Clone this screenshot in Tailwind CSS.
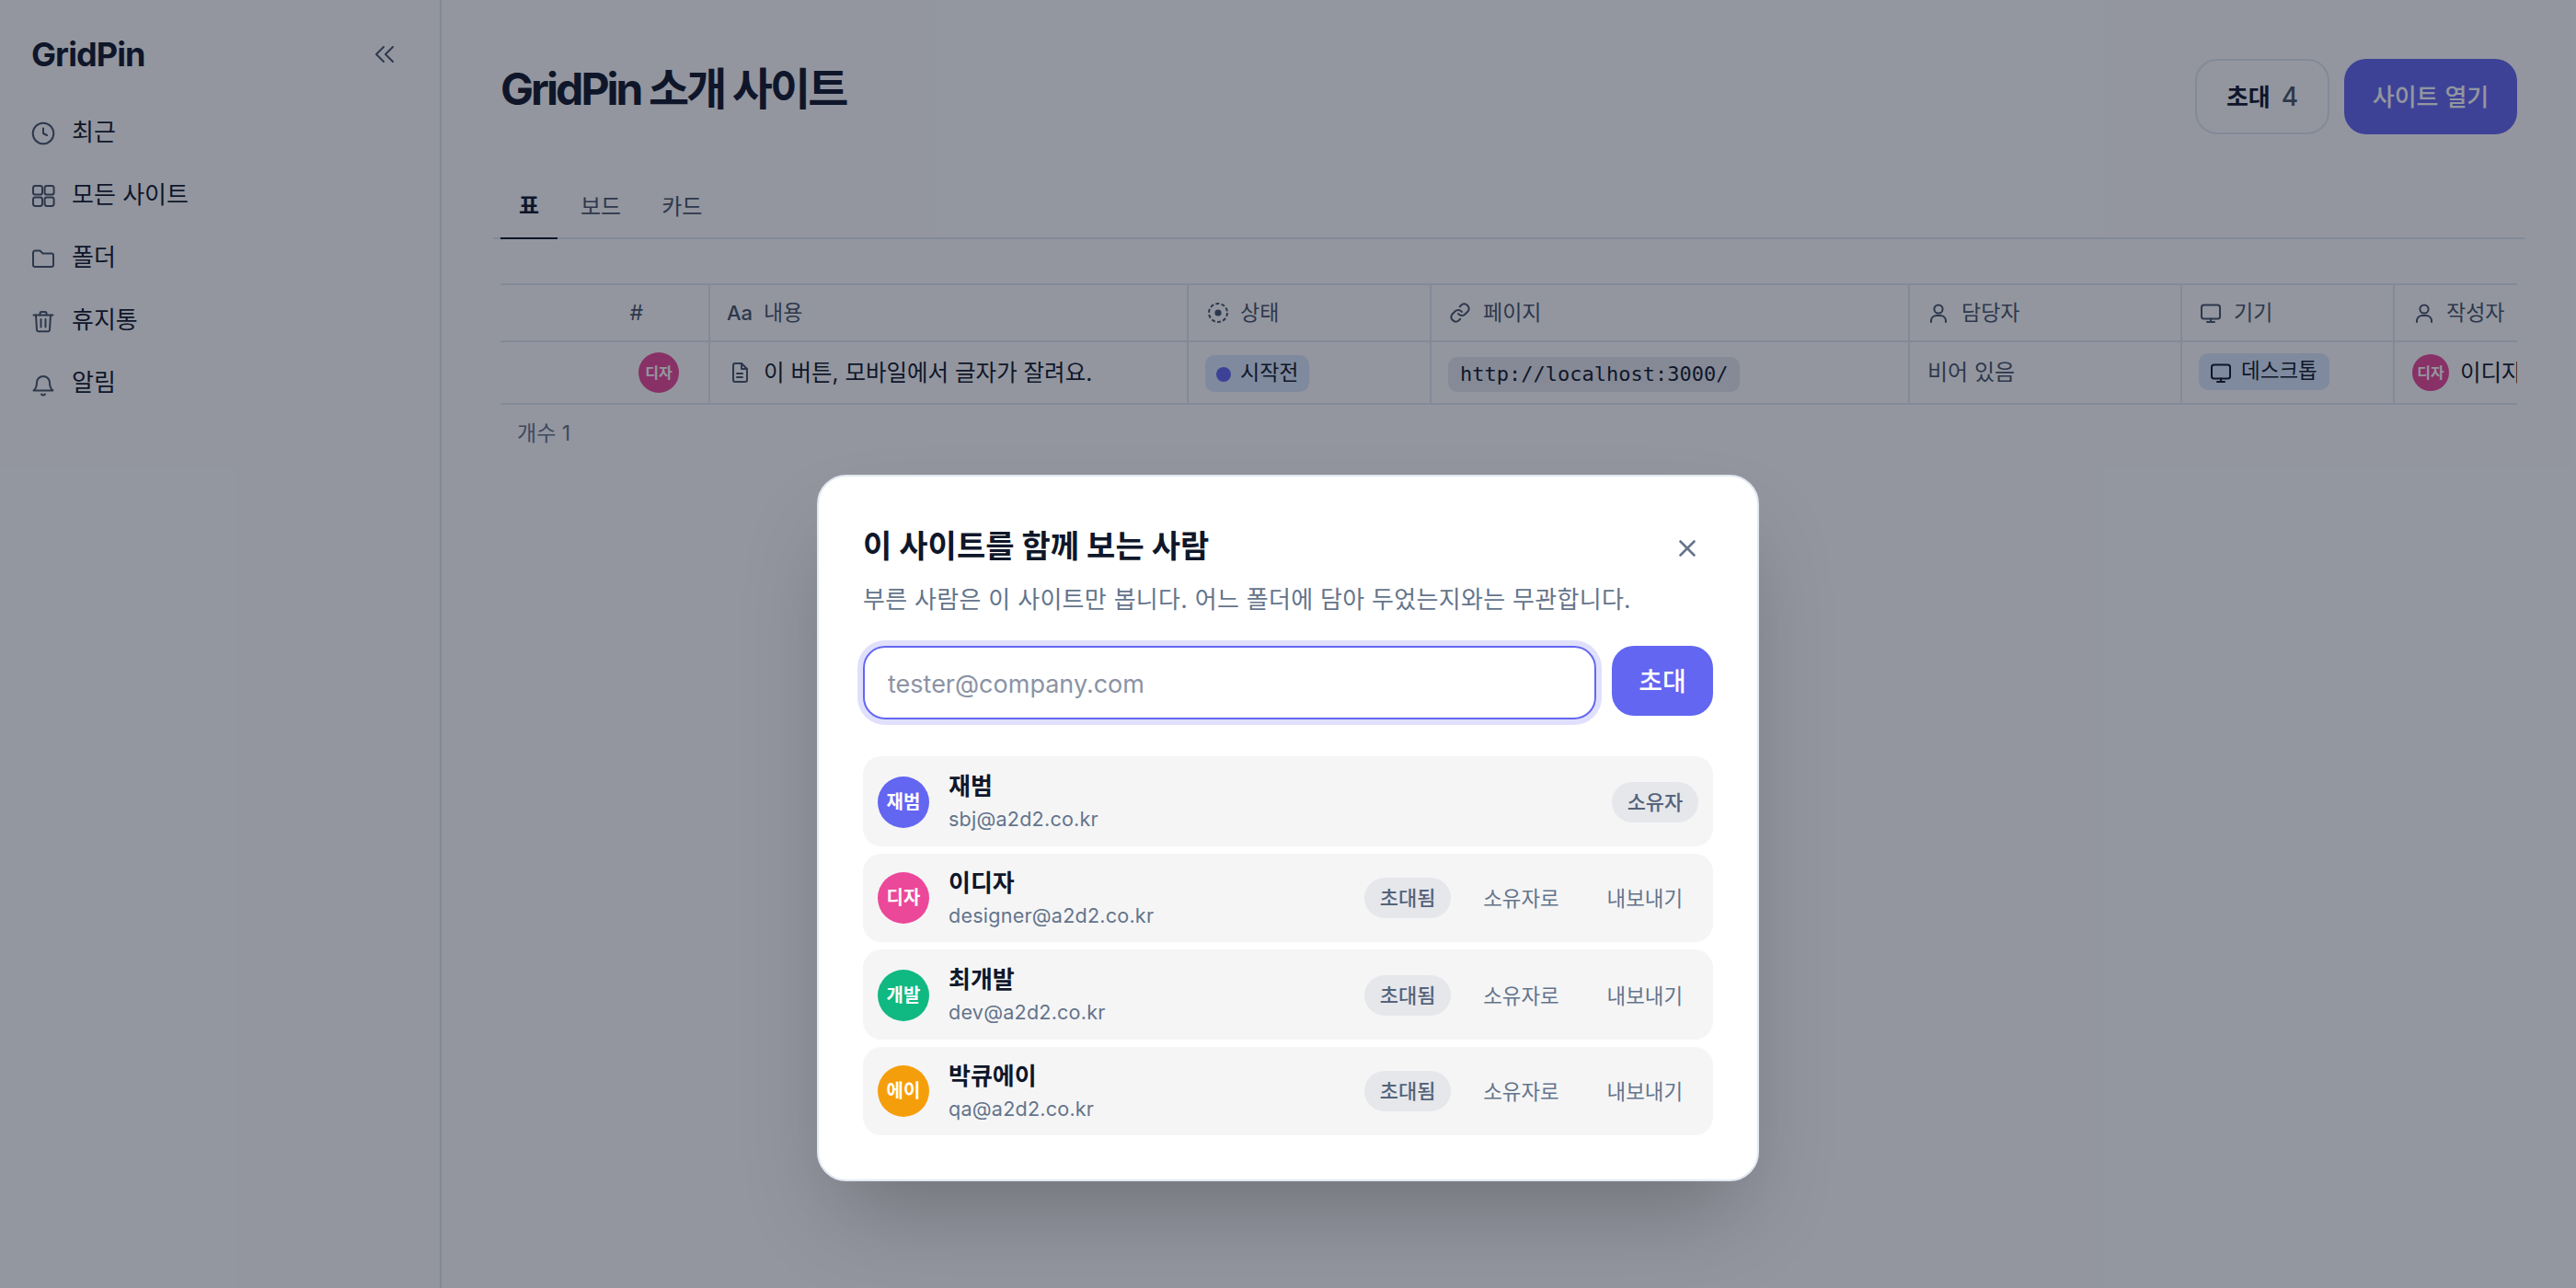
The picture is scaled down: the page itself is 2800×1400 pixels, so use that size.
<!DOCTYPE html>
<html lang="ko">
<head>
<meta charset="utf-8">
<title>GridPin</title>
<script src="https://cdn.jsdelivr.net/npm/@tailwindcss/browser@4"></script>
</head>
<body class="m-0">
<div class="relative flex w-[2800px] h-[1400px] overflow-hidden bg-white text-[#0f172a] font-['Inter','Noto_Sans_CJK_KR',sans-serif]">

  <aside class="w-[480px] h-full shrink-0 border-r-2 border-[#e2e8f0] flex flex-col">
    <div class="flex items-center justify-between h-[118px] pl-[34px] pr-[48px]">
      <span class="text-[36px] font-bold tracking-[-0.9px] leading-none">GridPin</span>
      <svg class="w-6 h-6 text-[#475569]" viewBox="0 0 24 24" fill="none" stroke="currentColor" stroke-width="2" stroke-linecap="round" stroke-linejoin="round"><path d="M11 4l-8 8 8 8"/><path d="M21 4l-8 8 8 8"/></svg>
    </div>
    <nav class="flex flex-col pl-[33px] mt-[-7px]">
      <div class="flex items-center gap-[17px] h-[68px] text-[26px]">
        <svg class="w-7 h-7 text-[#475569]" viewBox="0 0 28 28" fill="none" stroke="currentColor" stroke-width="2" stroke-linecap="round" stroke-linejoin="round"><circle cx="14" cy="14" r="11.3"/><path d="M14 8.5V14l4 2"/></svg>
        <span class="mt-[-3px]">최근</span>
      </div>
      <div class="flex items-center gap-[17px] h-[68px] text-[26px]">
        <svg class="w-7 h-7 text-[#475569]" viewBox="0 0 28 28" fill="none" stroke="currentColor" stroke-width="2" stroke-linejoin="round"><rect x="3" y="3" width="10" height="9.6" rx="2.4"/><rect x="15.6" y="3" width="10" height="9.6" rx="2.4"/><rect x="3" y="15.4" width="10" height="9.6" rx="2.4"/><rect x="15.6" y="15.4" width="10" height="9.6" rx="2.4"/></svg>
        <span class="mt-[-3px]">모든 사이트</span>
      </div>
      <div class="flex items-center gap-[17px] h-[68px] text-[26px]">
        <svg class="w-7 h-7 text-[#475569]" viewBox="0 0 28 28" fill="none" stroke="currentColor" stroke-width="2" stroke-linejoin="round"><path d="M3 7.5a2 2 0 0 1 2-2h5.5l3 3H23a2 2 0 0 1 2 2V21a2 2 0 0 1-2 2H5a2 2 0 0 1-2-2Z"/></svg>
        <span class="mt-[-3px]">폴더</span>
      </div>
      <div class="flex items-center gap-[17px] h-[68px] text-[26px]">
        <svg class="w-7 h-7 text-[#475569]" viewBox="0 0 28 28" fill="none" stroke="currentColor" stroke-width="2" stroke-linecap="round" stroke-linejoin="round"><path d="M3.5 7.5h21"/><path d="M10.5 7.5V5.5a1.5 1.5 0 0 1 1.5-1.5h4a1.5 1.5 0 0 1 1.5 1.5v2"/><path d="M6 7.5l1 16a2 2 0 0 0 2 1.8h10a2 2 0 0 0 2-1.8l1-16"/><path d="M11.5 12v8.5"/><path d="M16.5 12v8.5"/></svg>
        <span class="mt-[-3px]">휴지통</span>
      </div>
      <div class="flex items-center gap-[17px] h-[68px] text-[26px]">
        <svg class="w-7 h-7 text-[#475569]" viewBox="0 0 28 28" fill="none" stroke="currentColor" stroke-width="2" stroke-linecap="round" stroke-linejoin="round"><path d="M3.5 21.5c2.5-2 3.5-4 3.5-8.5a7 7 0 0 1 14 0c0 4.5 1 6.5 3.5 8.5Z"/><path d="M12 25.5a2.6 2.6 0 0 0 4 0"/></svg>
        <span class="mt-[-3px]">알림</span>
      </div>
    </nav>
  </aside>

  <main class="flex-1 min-w-0 pt-16 pl-16 pr-16">
    <div class="flex justify-between items-start h-[82px]">
      <h1 class="text-[48px] leading-[66px] font-bold tracking-[-2.95px]">GridPin 소개 사이트</h1>
      <div class="flex gap-4">
        <button class="w-[146px] h-[82px] rounded-[24px] border-2 border-[#e2e8f0] flex items-center justify-center gap-[12px] text-[26px] font-semibold">초대 <span class="text-[#475569] font-medium text-[28px]">4</span></button>
        <button class="w-[188px] h-[82px] rounded-[24px] bg-[#6366f1] text-white flex items-center justify-center text-[26px] font-medium">사이트 열기</button>
      </div>
    </div>

    <div class="flex mt-[50px] h-16 -mx-2 px-2 border-b-2 border-[#e2e8f0] text-[24px]">
      <div class="w-[62px] h-16 border-b-[2px] border-[#0f172a] flex items-center justify-center font-semibold pb-[6px]">표</div>
      <div class="h-[58px] flex items-center ml-[25px] text-[#475569]">보드</div>
      <div class="h-[58px] flex items-center ml-[44px] text-[#475569]">카드</div>
    </div>

    <div class="mt-12 w-[2192px] overflow-hidden">
      <div class="grid grid-cols-[228px_520px_264px_520px_296px_231px_200px] h-[64px] border-t-2 border-b-2 border-[#e2e8f0] text-[23px] text-[#475569]">
        <div class="border-r-2 border-[#e2e8f0] flex items-center justify-end pr-[71px]">#</div>
        <div class="border-r-2 border-[#e2e8f0] flex items-center pl-[18px] gap-[12px]"><span class="text-[22px] font-medium">Aa</span><span>내용</span></div>
        <div class="border-r-2 border-[#e2e8f0] flex items-center pl-[20px] gap-[12px]">
          <svg class="w-6 h-6" viewBox="0 0 24 24" fill="none" stroke="currentColor" stroke-width="2"><circle cx="12" cy="12" r="10" stroke-dasharray="4 2.3"/><circle cx="12" cy="12" r="3.6" fill="currentColor" stroke="none"/></svg>
          <span>상태</span></div>
        <div class="border-r-2 border-[#e2e8f0] flex items-center pl-[19px] gap-[13px]">
          <svg class="w-6 h-6" viewBox="0 0 24 24" fill="none" stroke="currentColor" stroke-width="2" stroke-linecap="round" stroke-linejoin="round"><path d="M10 13a5 5 0 0 0 7.5.5l3-3a5 5 0 0 0-7-7l-1.7 1.7"/><path d="M14 11a5 5 0 0 0-7.5-.5l-3 3a5 5 0 0 0 7 7l1.7-1.7"/></svg>
          <span>페이지</span></div>
        <div class="border-r-2 border-[#e2e8f0] flex items-center pl-[19px] gap-[13px]">
          <svg class="w-6 h-6" viewBox="0 0 24 24" fill="none" stroke="currentColor" stroke-width="2" stroke-linecap="round"><circle cx="12" cy="8" r="4.6"/><path d="M4 22v-1.5A6 6 0 0 1 10 15h4a6 6 0 0 1 6 5.5V22"/></svg>
          <span>담당자</span></div>
        <div class="border-r-2 border-[#e2e8f0] flex items-center pl-[19px] gap-[13px]">
          <svg class="w-6 h-6" viewBox="0 0 24 24" fill="none" stroke="currentColor" stroke-width="2" stroke-linecap="round" stroke-linejoin="round"><rect x="2" y="3.5" width="20" height="15" rx="2.5"/><path d="M12 18.5V22"/><path d="M8 22h8"/></svg>
          <span>기기</span></div>
        <div class="flex items-center pl-[20px] gap-[12px]">
          <svg class="w-6 h-6" viewBox="0 0 24 24" fill="none" stroke="currentColor" stroke-width="2" stroke-linecap="round"><circle cx="12" cy="8" r="4.6"/><path d="M4 22v-1.5A6 6 0 0 1 10 15h4a6 6 0 0 1 6 5.5V22"/></svg>
          <span>작성자</span></div>
      </div>
      <div class="grid grid-cols-[228px_520px_264px_520px_296px_231px_200px] h-[68px] border-b-2 border-[#e2e8f0] text-[24.5px]">
        <div class="border-r-2 border-[#e2e8f0] flex items-center justify-end pr-[32px]">
          <div class="w-[44px] h-[44px] rounded-full bg-[#ec4899] text-white text-[16px] font-semibold flex items-center justify-center">디자</div>
        </div>
        <div class="border-r-2 border-[#e2e8f0] flex items-center pl-[20px] gap-[14px]">
          <svg class="w-6 h-6 text-[#475569]" viewBox="0 0 24 24" fill="none" stroke="currentColor" stroke-width="2" stroke-linecap="round" stroke-linejoin="round"><path d="M5 4a2 2 0 0 1 2-2h7l6 6v12a2 2 0 0 1-2 2H7a2 2 0 0 1-2-2Z"/><path d="M14 2v6h6"/><path d="M9 13h6"/><path d="M9 17h6"/></svg>
          <span>이 버튼, 모바일에서 글자가 잘려요.</span>
        </div>
        <div class="border-r-2 border-[#e2e8f0] flex items-center pl-[18px]">
          <div class="h-10 rounded-[10px] bg-[#dbeafe] flex items-center pl-3 pr-[12px] gap-[10px] text-[23px] mt-[2px]"><span class="w-4 h-4 rounded-full bg-[#6366f1] mt-[2px]"></span><span class="mt-[-2px]">시작전</span></div>
        </div>
        <div class="border-r-2 border-[#e2e8f0] flex items-center pl-[18px]">
          <code class="h-[38px] rounded-[10px] bg-[#e8e9ee] px-[13px] flex items-center text-[22px] font-['DejaVu_Sans_Mono',monospace] mt-[3px]">http://localhost:3000/</code>
        </div>
        <div class="border-r-2 border-[#e2e8f0] flex items-center pl-[19px] text-[24px] text-[#475569]">비어 있음</div>
        <div class="border-r-2 border-[#e2e8f0] flex items-center pl-[18px]">
          <div class="h-10 rounded-[10px] bg-[#dbeafe] flex items-center pl-3 pr-[13px] gap-[10px] text-[22.5px] mt-[-2px]">
            <svg class="w-6 h-6 mt-[2px]" viewBox="0 0 24 24" fill="none" stroke="currentColor" stroke-width="2" stroke-linecap="round" stroke-linejoin="round"><rect x="2" y="3.5" width="20" height="15" rx="2.5"/><path d="M12 18.5V22"/><path d="M8 22h8"/></svg>
            <span class="mt-[-2px]">데스크톱</span></div>
        </div>
        <div class="flex items-center pl-[19px] gap-[12px] whitespace-nowrap">
          <div class="w-10 h-10 shrink-0 rounded-full bg-[#ec4899] text-white text-[16px] font-semibold flex items-center justify-center">디자</div>
          <span>이디자</span>
        </div>
      </div>
    </div>
    <div class="pl-[18px] pt-[15px] text-[23px] leading-8 text-[#64748b]">개수 1</div>
  </main>

  <div class="absolute inset-0 bg-[#0f172a]/45 flex justify-center items-start pt-[516px]">
    <div class="w-[1024px] h-[768px] bg-white rounded-[32px] border-2 border-[#e2e8f0] shadow-[0_50px_100px_-24px_rgb(0_0_0/0.25)] px-[48px] pt-[48px]">
      <div class="flex justify-between items-start">
        <h2 class="text-[34px] leading-[56px] font-bold">이 사이트를 함께 보는 사람</h2>
        <svg class="w-8 h-8 mt-[14px] mr-[12px] text-[#64748b]" viewBox="0 0 32 32" fill="none" stroke="currentColor" stroke-width="2.6" stroke-linecap="round"><path d="M8.5 8.5l15 15"/><path d="M23.5 8.5l-15 15"/></svg>
      </div>
      <p class="mt-[10px] text-[26px] tracking-[0.3px] leading-[40px] text-[#64748b]">부른 사람은 이 사이트만 봅니다. 어느 폴더에 담아 두었는지와는 무관합니다.</p>
      <div class="flex gap-[17px] mt-[30px] items-start">
        <input class="w-[797px] h-20 rounded-[24px] border-2 border-[#6366f1] ring-[6px] ring-[#6366f1]/20 px-[25px] pt-[2px] text-[27px] outline-none placeholder:text-[#8b93a5]" placeholder="tester@company.com">
        <button class="w-[110px] h-[76px] rounded-[24px] bg-[#6366f1] text-white text-[28px] font-medium flex items-center justify-center pt-[2px]">초대</button>
      </div>
      <div class="flex flex-col gap-2 mt-10">
        <div class="h-[98px] rounded-[20px] bg-[#f5f5f6] flex items-center px-4 gap-[21px]">
          <div class="w-14 h-14 mt-[2px] rounded-full bg-[#6366f1] text-white text-[20px] font-semibold flex items-center justify-center shrink-0">재범</div>
          <div class="flex-1 min-w-0"><div class="text-[26px] leading-[38px] font-semibold">재범</div><div class="text-[21.6px] leading-[32px] tracking-[0.2px] text-[#64748b]">sbj@a2d2.co.kr</div></div>
          <span class="w-[94px] h-11 mt-[2px] rounded-full bg-[#e5e7eb] text-[#56637a] text-[22px] font-medium flex items-center justify-center">소유자</span>
        </div>
        <div class="h-[96px] rounded-[20px] bg-[#f5f5f6] flex items-center pl-4 pr-0 gap-[21px]">
          <div class="w-14 h-14 rounded-full bg-[#ec4899] text-white text-[20px] font-semibold flex items-center justify-center shrink-0">디자</div>
          <div class="flex-1 min-w-0"><div class="text-[26px] leading-[38px] font-semibold">이디자</div><div class="text-[21.6px] leading-[32px] tracking-[0.2px] text-[#64748b]">designer@a2d2.co.kr</div></div>
          <div class="flex items-center gap-[18px] pr-4">
            <span class="w-[94px] h-11 rounded-full bg-[#e5e7eb] text-[#56637a] text-[22px] font-medium flex items-center justify-center">초대됨</span>
            <button class="px-[17px] text-[22.4px] text-[#64748b] mt-[2px]">소유자로</button>
            <button class="px-[17px] text-[22.4px] text-[#64748b] mt-[2px]">내보내기</button>
          </div>
        </div>
        <div class="h-[98px] rounded-[20px] bg-[#f5f5f6] flex items-center pl-4 gap-[21px]">
          <div class="w-14 h-14 mt-[2px] rounded-full bg-[#10b981] text-white text-[20px] font-semibold flex items-center justify-center shrink-0">개발</div>
          <div class="flex-1 min-w-0"><div class="text-[26px] leading-[38px] font-semibold">최개발</div><div class="text-[21.6px] leading-[32px] tracking-[0.2px] text-[#64748b]">dev@a2d2.co.kr</div></div>
          <div class="flex items-center gap-[18px] pr-4 mt-[2px]">
            <span class="w-[94px] h-11 rounded-full bg-[#e5e7eb] text-[#56637a] text-[22px] font-medium flex items-center justify-center">초대됨</span>
            <button class="px-[17px] text-[22.4px] text-[#64748b] mt-[2px]">소유자로</button>
            <button class="px-[17px] text-[22.4px] text-[#64748b] mt-[2px]">내보내기</button>
          </div>
        </div>
        <div class="h-[96px] rounded-[20px] bg-[#f5f5f6] flex items-center pl-4 gap-[21px]">
          <div class="w-14 h-14 rounded-full bg-[#f59e0b] text-white text-[20px] font-semibold flex items-center justify-center shrink-0">에이</div>
          <div class="flex-1 min-w-0"><div class="text-[26px] leading-[38px] font-semibold">박큐에이</div><div class="text-[21.6px] leading-[32px] tracking-[0.2px] text-[#64748b]">qa@a2d2.co.kr</div></div>
          <div class="flex items-center gap-[18px] pr-4">
            <span class="w-[94px] h-11 rounded-full bg-[#e5e7eb] text-[#56637a] text-[22px] font-medium flex items-center justify-center">초대됨</span>
            <button class="px-[17px] text-[22.4px] text-[#64748b] mt-[2px]">소유자로</button>
            <button class="px-[17px] text-[22.4px] text-[#64748b] mt-[2px]">내보내기</button>
          </div>
        </div>
      </div>
    </div>
  </div>
</div>
</body>
</html>
